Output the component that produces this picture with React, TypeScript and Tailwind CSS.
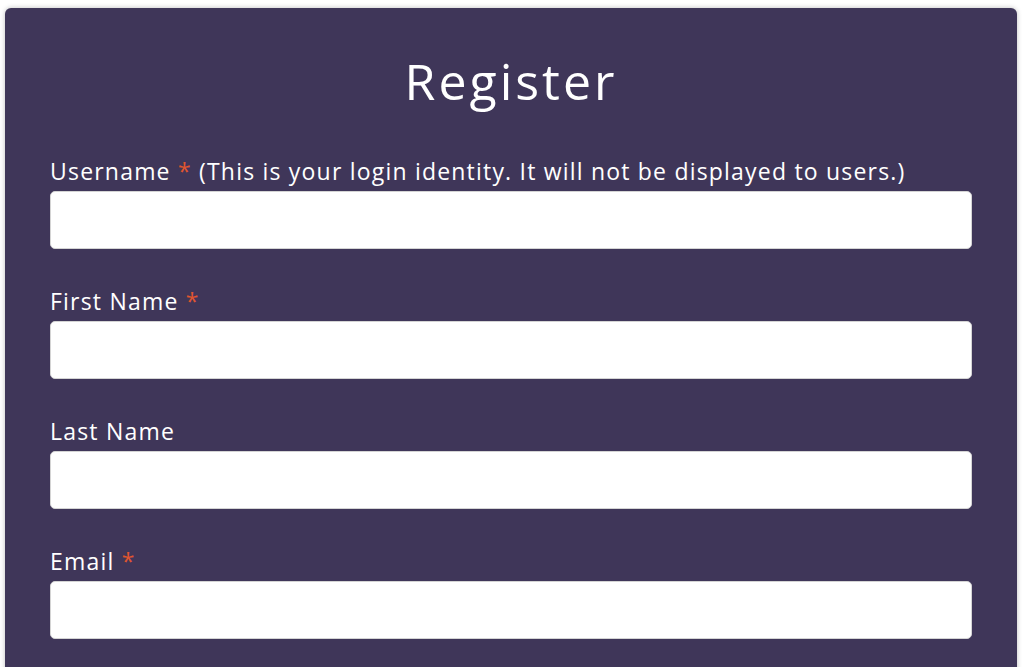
const fields = [
  { label: "Username", required: true, hint: "(This is your login identity. It will not be displayed to users.)" },
  { label: "First Name", required: true },
  { label: "Last Name", required: false },
  { label: "Email", required: true },
];

export default function App() {
  return (
    <div className="min-h-screen bg-white pt-2 pl-[5px] pr-[7px] font-['Open_Sans',sans-serif]">
      <div className="rounded-t-md bg-[#3f3659] px-[45px] pt-[48px] pb-16 shadow-[0_0_5px_rgba(0,0,0,0.25)]">
        <h1 className="text-center text-[50px] leading-[50px] font-normal tracking-[3px] text-white">Register</h1>
        <form className="mt-[50px] flex flex-col gap-[37px]">
          {fields.map((f) => (
            <div key={f.label} className="flex flex-col">
              <label className="mb-[5px] whitespace-nowrap text-[23px] leading-[30px] tracking-[1.2px] text-white">
                {f.label}
                {f.required && <span className="text-[#e0552f]"> *</span>}
                {f.hint && <span> {f.hint}</span>}
              </label>
              <input
                type="text"
                className="h-[58px] w-full rounded-[5px] border border-[#d4d4d4] bg-white px-3 text-[18px] text-gray-800 outline-none"
              />
            </div>
          ))}
        </form>
      </div>
    </div>
  );
}
